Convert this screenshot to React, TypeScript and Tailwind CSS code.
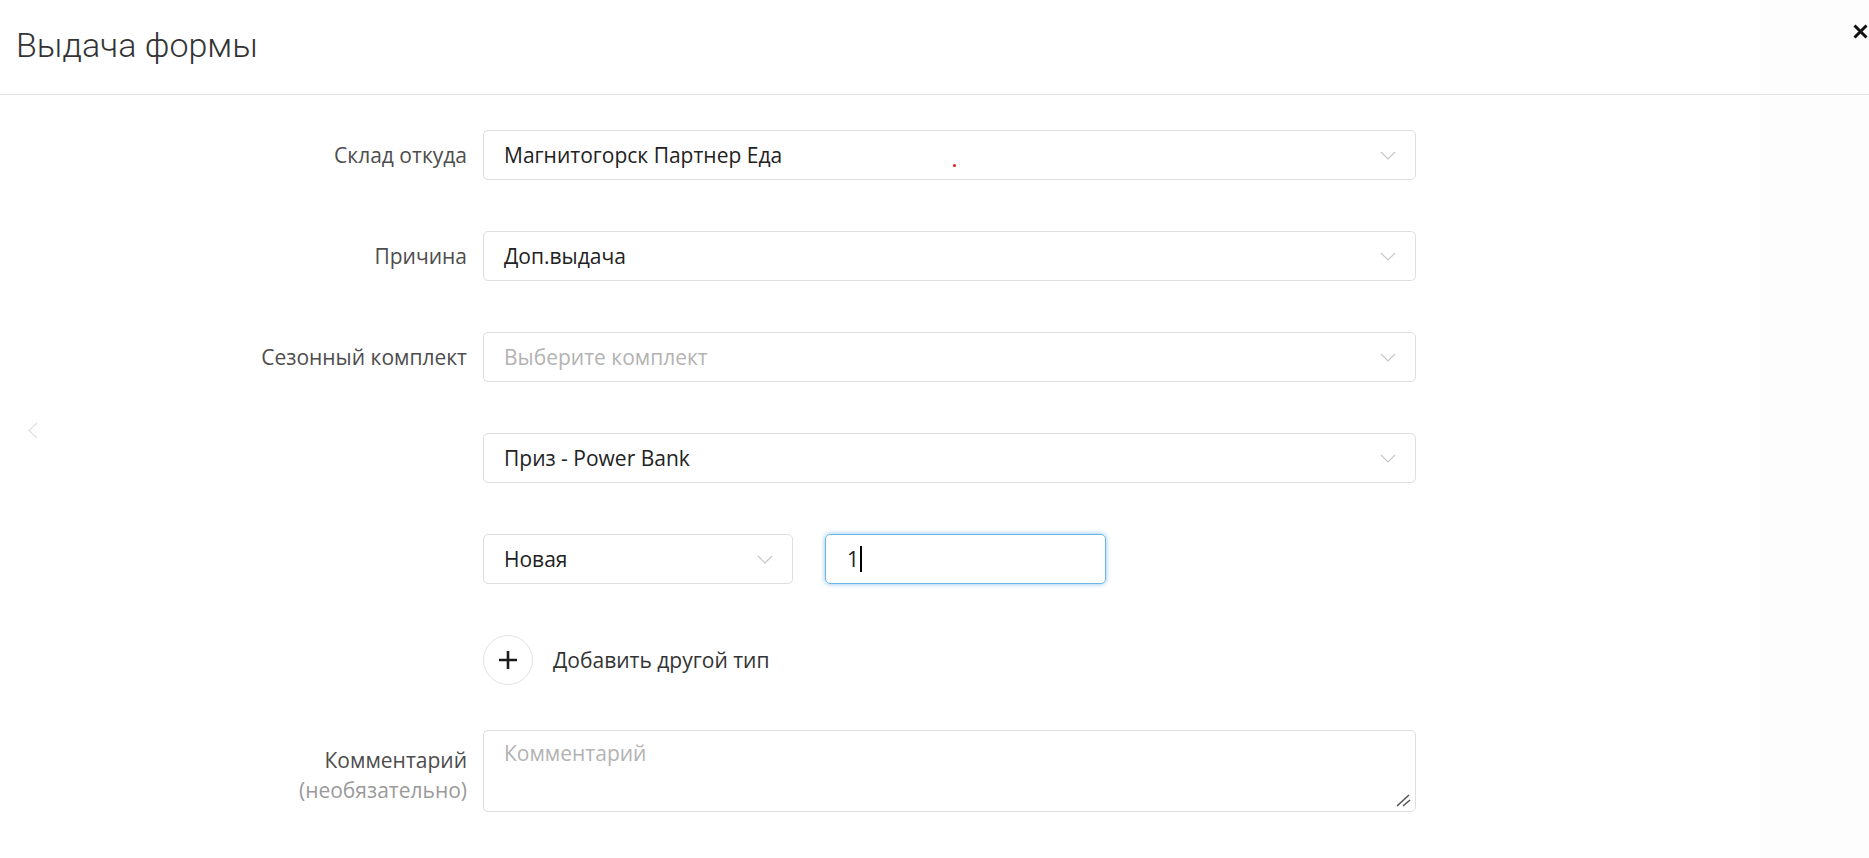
import React from 'react';

const Chevron: React.FC = () => (
    <svg width="16" height="9" viewBox="0 0 16 9" fill="none" className="shrink-0">
        <polyline points="1,1 8,8 15,1" stroke="#c7c7c7" strokeWidth="1.2" />
    </svg>
);

const SelectBox: React.FC<{ value: string; placeholder?: boolean; className?: string }> = ({ value, placeholder, className }) => (
    <div className={`h-[50px] flex items-center justify-between pl-[20px] pr-[19px] border border-[#dedede] rounded-[5px] bg-white ${className ?? ''}`}>
        <span className={placeholder ? 'text-[#b3b3b3]' : 'text-[#222]'}>{value}</span>
        <Chevron />
    </div>
);

const Row: React.FC<{ label?: string; children: React.ReactNode }> = ({ label, children }) => (
    <div className="flex mb-[51px]">
        <div className="w-[467px] shrink-0 flex items-center justify-end text-[#4d4d4d]">{label}</div>
        <div className="ml-[16px] w-[933px]">{children}</div>
    </div>
);

const App: React.FC = () => {
    return (
        <div className="relative w-full h-[858px] overflow-hidden bg-white flex flex-col text-[21px] leading-[26px]" style={{ fontFamily: '"Open Sans", Roboto, sans-serif' }}>
            {/* header */}
            <div className="h-[95px] shrink-0 flex border-b border-[#e3e3e3]">
                <div className="flex-1 pl-[16px] pt-[25px]">
                    <h1 className="text-[34px] leading-[40px] font-light text-[#333]" style={{ fontFamily: 'Roboto, sans-serif' }}>Выдача формы</h1>
                </div>
                <div className="w-[109px] bg-[#fdfdfd] pl-[93px] pt-[24px]">
                    <svg width="15" height="15" viewBox="0 0 15 15" aria-label="Закрыть">
                        <path d="M1.5 1.5l12 12M13.5 1.5l-12 12" stroke="#111" strokeWidth="3" />
                    </svg>
                </div>
            </div>

            {/* body */}
            <div className="flex-1 flex">
                <div className="flex-1 pt-[35px]">
                    <Row label="Склад откуда">
                        <SelectBox value="Магнитогорск Партнер Еда" />
                    </Row>
                    <Row label="Причина">
                        <SelectBox value="Доп.выдача" />
                    </Row>
                    <Row label="Сезонный комплект">
                        <SelectBox value="Выберите комплект" placeholder />
                    </Row>
                    <Row>
                        <SelectBox value="Приз - Power Bank" />
                    </Row>
                    <Row>
                        <div className="flex gap-[32px]">
                            <SelectBox value="Новая" className="w-[310px]" />
                            <div className="w-[281px] h-[50px] flex items-center pl-[21px] border border-[#6db6e6] rounded-[5px] shadow-[0_0_5px_rgba(60,150,220,0.6)]">
                                <span className="text-[#222]">1</span>
                                <span className="w-[2px] h-[26px] bg-black ml-[1px]" />
                            </div>
                        </div>
                    </Row>
                    <div className="flex mb-[45px]">
                        <div className="w-[467px] shrink-0" />
                        <div className="ml-[16px] flex items-center gap-[20px]">
                            <div className="w-[50px] h-[50px] rounded-full border border-[#e2e2e2] flex items-center justify-center">
                                <svg width="20" height="20" viewBox="0 0 20 20">
                                    <path d="M10 1v18M1 10h18" stroke="#1a1a1a" strokeWidth="2.6" />
                                </svg>
                            </div>
                            <span className="text-[#333]">Добавить другой тип</span>
                        </div>
                    </div>
                    <div className="flex">
                        <div className="w-[467px] shrink-0 pt-[15px] text-right leading-[30px]">
                            <div className="text-[#4d4d4d]">Комментарий</div>
                            <div className="text-[#9a9a9a]">(необязательно)</div>
                        </div>
                        <div className="relative ml-[16px] w-[933px] h-[82px]">
                            <textarea
                                placeholder="Комментарий"
                                className="w-full h-full resize-none pl-[20px] pt-[9px] border border-[#dedede] rounded-[5px] outline-none placeholder:text-[#b3b3b3] text-[#222]"
                            />
                            <svg className="absolute right-[5px] bottom-[5px]" width="15" height="13" viewBox="0 0 15 13" fill="none">
                                <path d="M1 12L13 1M7 12L14 6" stroke="#555" strokeWidth="1.6" />
                            </svg>
                        </div>
                    </div>
                </div>
                <div className="w-[109px] shrink-0 bg-[#fdfdfd]" />
            </div>

            {/* faint side arrow */}
            <svg className="absolute left-[28px] top-[422px]" width="10" height="17" viewBox="0 0 10 17" fill="none">
                <polyline points="9,1 1,8.5 9,16" stroke="#e2e2e2" strokeWidth="1.4" />
            </svg>
            {/* stray red dot */}
            <span className="absolute left-[953px] top-[164px] w-[3px] h-[3px] rounded-full bg-[#e02020]" />
        </div>
    );
};

export default App;
